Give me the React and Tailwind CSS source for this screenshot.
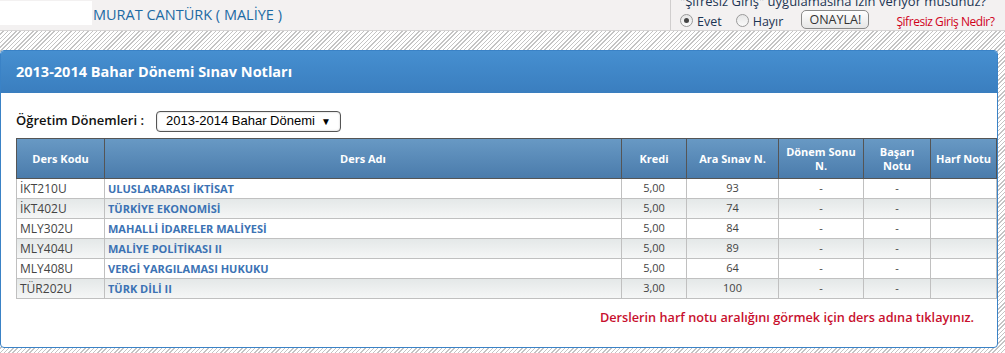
const rows = [
  { kod: "İKT210U", ad: "ULUSLARARASI İKTİSAT", kredi: "5,00", ara: "93" },
  { kod: "İKT402U", ad: "TÜRKİYE EKONOMİSİ", kredi: "5,00", ara: "74" },
  { kod: "MLY302U", ad: "MAHALLİ İDARELER MALİYESİ", kredi: "5,00", ara: "84" },
  { kod: "MLY404U", ad: "MALİYE POLİTİKASI II", kredi: "5,00", ara: "89" },
  { kod: "MLY408U", ad: "VERGİ YARGILAMASI HUKUKU", kredi: "5,00", ara: "64" },
  { kod: "TÜR202U", ad: "TÜRK DİLİ II", kredi: "3,00", ara: "100" },
];

function Radio({ checked }) {
  return (
    <span className="w-[13px] h-[13px] rounded-full border border-[#9a9a9a] bg-gradient-to-b from-[#e6e6e6] to-[#fafafa] flex items-center justify-center">
      {checked && <span className="w-[5px] h-[5px] rounded-full bg-[#444]" />}
    </span>
  );
}

export default function App() {
  return (
    <div className="w-[1005px] h-[353px] overflow-hidden bg-[repeating-linear-gradient(135deg,#c4c4c4_0px,#c4c4c4_1px,#ffffff_1px,#ffffff_3px)] font-['Open_Sans',sans-serif]">
      {/* üst bar */}
      <div className="h-[31px] bg-[#f3f1f1] border-b border-[#d6d4d4] flex">
        <div className="w-[92px] h-[24px] mt-[1px] bg-white" />
        <div className="ml-[1px] pt-[5px] text-[14.5px] leading-[20px] text-[#1d6aa3]">MURAT CANTÜRK ( MALİYE )</div>
        <div className="flex-1" />
        <div className="w-[335px] shrink-0 border-l border-[#d0cece] pl-[9px] text-[#1c3553]">
          <div className="text-[13px] leading-[16px] -mt-[7px] whitespace-nowrap">"Şifresiz Giriş" uygulamasına izin veriyor musunuz?</div>
          <div className="flex items-center h-[19px] mt-[1px] text-[12.5px] whitespace-nowrap">
            <span className="shrink-0 mt-[2px]"><Radio checked /></span>
            <span className="shrink-0 ml-[4px] mt-[5px]">Evet</span>
            <span className="shrink-0 ml-[14px] mt-[2px]"><Radio /></span>
            <span className="shrink-0 ml-[4px] mt-[5px]">Hayır</span>
            <button className="shrink-0 ml-[18px] w-[68px] h-[19px] rounded-[5px] border border-[#8a8a8a] bg-gradient-to-b from-[#ffffff] to-[#e6e6e6] text-[12.5px] leading-[15px] text-[#333]">ONAYLA!</button>
            <span className="shrink-0 ml-[27px] mt-[5px] text-[#d0021b] text-[12px] tracking-[-0.45px]">Şifresiz Giriş Nedir?</span>
          </div>
        </div>
      </div>
      <div className="h-[19px]" />

      {/* panel */}
      <div className="w-[998px] h-[298px] bg-white border border-[#3a82c6] rounded-[4px] overflow-hidden">
        <div className="h-[42px] bg-gradient-to-b from-[#468fd0] to-[#3a7ebf] text-white font-bold text-[14.5px] pl-[15px] flex items-center">
          2013-2014 Bahar Dönemi Sınav Notları
        </div>
        <div className="px-[15px]">
          <div className="flex items-center mt-[17px] h-[22px]">
            <span className="w-[140px] text-[13px] font-semibold text-[#111]">Öğretim Dönemleri :</span>
            <div className="w-[185px] h-[21px] border border-[#555] rounded-[4px] shadow-[inset_0_0_2px_#bbb] flex items-center pl-[9px] pr-[9px] font-['Liberation_Sans',sans-serif] text-[13px] text-black">
              <span className="flex-1">2013-2014 Bahar Dönemi</span>
              <span className="text-[10px]">▼</span>
            </div>
          </div>

          <table className="mt-[6px] w-[980px] border-collapse text-[12px] table-fixed">
            <colgroup>
              <col className="w-[88px]" />
              <col className="w-[517px]" />
              <col className="w-[65px]" />
              <col className="w-[92px]" />
              <col className="w-[85px]" />
              <col className="w-[67px]" />
              <col className="w-[66px]" />
            </colgroup>
            <thead>
              <tr className="h-[40px] bg-gradient-to-b from-[#6899c4] to-[#4a7bab] text-white text-[11px] font-bold leading-[14px]">
                {["Ders Kodu", "Ders Adı", "Kredi", "Ara Sınav N.", "Dönem Sonu N.", "Başarı Notu", "Harf Notu"].map((h) => (
                  <th key={h} className="border border-[#555] px-[4px] text-center font-bold">{h}</th>
                ))}
              </tr>
            </thead>
            <tbody>
              {rows.map((r, i) => (
                <tr key={r.kod} className={`h-[20px] ${i % 2 ? "bg-gradient-to-b from-[#e4e8e8] to-[#f6f7f7]" : "bg-white"}`}>
                  <td className="border border-[#c0c0c0] pl-[3px] text-[#444] text-[12px] leading-[18px]">{r.kod}</td>
                  <td className="border border-[#c0c0c0] pl-[3px] text-[#3c73b4] text-[11px] font-bold leading-[18px]">{r.ad}</td>
                  <td className="border border-[#c0c0c0] text-center text-[#444] text-[11px]">{r.kredi}</td>
                  <td className="border border-[#c0c0c0] text-center text-[#444] text-[11px]">{r.ara}</td>
                  <td className="border border-[#c0c0c0] text-center text-[#444] text-[11px]">-</td>
                  <td className="border border-[#c0c0c0] text-center text-[#444] text-[11px]">-</td>
                  <td className="border border-[#c0c0c0]" />
                </tr>
              ))}
            </tbody>
          </table>

          <div className="mt-[9px] pr-[8px] text-right text-[12.7px] font-semibold text-[#c8102e]">
            Derslerin harf notu aralığını görmek için ders adına tıklayınız.
          </div>
        </div>
      </div>
    </div>
  );
}
